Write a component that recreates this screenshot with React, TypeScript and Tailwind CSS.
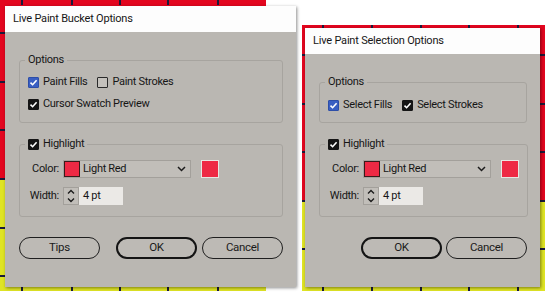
import { ReactNode } from 'react';

type Box = 'blue' | 'black' | 'off';

const Check = ({ kind }: { kind: Box }) => {
  if (kind === 'off') {
    return <span className="block w-[11px] h-[11px] border border-[#2a2a2a] bg-[#c4c1bc] rounded-[1px]" />;
  }
  return (
    <span
      className={`flex w-[11px] h-[11px] items-center justify-center rounded-[1px] ${
        kind === 'blue' ? 'bg-[#3a5fc2] border border-[#2d4ea8]' : 'bg-[#151515] border border-[#151515]'
      }`}
    >
      <svg width="9" height="9" viewBox="0 0 9 9">
        <path d="M1.5 4.6 L3.6 6.7 L7.6 2.2" fill="none" stroke="white" strokeWidth="1.6" />
      </svg>
    </span>
  );
};

const Option = ({ kind, label }: { kind: Box; label: string }) => (
  <div className="flex items-center gap-[4px] h-4">
    <Check kind={kind} />
    <span>{label}</span>
  </div>
);

const Group = ({ legend, children, className }: { legend: ReactNode; children: ReactNode; className: string }) => (
  <fieldset className={`border border-[#a7a49f] rounded-[3px] pl-2 pr-2 ${className}`}>
    <legend className="-ml-[3px] px-[3px] leading-4">{legend}</legend>
    {children}
  </fieldset>
);

const Spinner = () => (
  <svg width="14" height="16" viewBox="0 0 14 16">
    <path d="M4 5.5 L7 2.5 L10 5.5" fill="none" stroke="#1c1c1c" strokeWidth="1.4" />
    <path d="M4 10.5 L7 13.5 L10 10.5" fill="none" stroke="#1c1c1c" strokeWidth="1.4" />
  </svg>
);

const HighlightGroup = () => (
  <Group legend={<Option kind="black" label="Highlight" />} className="mt-[13px] pb-[11px]">
    <div className="mt-[8px] flex items-center h-[18px]">
      <span className="w-[31px] text-right">Color:</span>
      <div className="ml-[4px] w-[128px] h-[18px] flex items-center border border-[#a3a09b] bg-[#c1beb9] pr-[4px]">
        <span className="w-[16px] h-[16px] bg-[#ee2944] border border-[#3a1a1a]" />
        <span className="ml-[3px] flex-1">Light Red</span>
        <svg width="9" height="6" viewBox="0 0 9 6">
          <path d="M1 1 L4.5 4.5 L8 1" fill="none" stroke="#1c1c1c" strokeWidth="1.5" />
        </svg>
      </div>
      <span className="ml-[10px] w-[18px] h-[18px] bg-[#ee2944] border border-[#e9e6e2]" />
    </div>
    <div className="mt-[9px] flex items-center h-[18px]">
      <span className="w-[31px] text-right">Width:</span>
      <div className="ml-[4px] flex h-[18px]">
        <span className="w-[16px] h-[18px] bg-[#c1beb9] border border-[#a3a09b]">
          <Spinner />
        </span>
        <span className="w-[44px] h-[18px] bg-[#ebe9e6] flex items-center pl-[4px]">4 pt</span>
      </div>
    </div>
  </Group>
);

const Button = ({ label, primary }: { label: string; primary?: boolean }) => (
  <button
    className={`h-[22px] w-[81px] rounded-full bg-[#bdbab5] text-[#1b1b1b] text-[11.5px] ${
      primary ? 'border-2 border-[#141414]' : 'border-[1.5px] border-[#1f1f1f]'
    }`}
  >
    {label}
  </button>
);

const Dialog = ({ title, className, children }: { title: string; className: string; children: ReactNode }) => (
  <div className={`absolute flex flex-col shadow-[1px_1px_3px_rgba(0,0,0,0.45)] ${className}`}>
    <div className="h-[26px] bg-[#fdfdfd] flex items-center pl-[8px] text-[11px] tracking-[-0.2px]">{title}</div>
    <div className="flex-1 bg-[#bab7b2] pl-[14px] pr-[13px]">{children}</div>
  </div>
);

const Canvas = ({
  className,
  redHeight,
  xs,
  ys,
  w,
  h,
}: {
  className: string;
  redHeight: string;
  xs: number[];
  ys: number[];
  w: number;
  h: number;
}) => (
  <div className={`absolute flex flex-col ${className}`}>
    <div className={`bg-[#e3061f] ${redHeight}`} />
    <div className="flex-1 bg-[#dfe424]" />
    {xs.map(x => (
      <span key={'t' + x} className="absolute top-0 w-[2px] h-[5px] bg-[#1b1b3a]" style={{ left: x }} />
    ))}
    {xs.map(x => (
      <span key={'b' + x} className="absolute w-[2px] h-[5px] bg-[#1b1b3a]" style={{ left: x, top: h - 5 }} />
    ))}
    {ys.map(y => (
      <span key={'l' + y} className="absolute left-0 h-[2px] w-[5px] bg-[#1b1b3a]" style={{ top: y }} />
    ))}
    {ys.map(y => (
      <span key={'r' + y} className="absolute h-[2px] w-[5px] bg-[#1b1b3a]" style={{ top: y, left: w - 5 }} />
    ))}
  </div>
);

export default function App() {
  return (
    <div className="relative w-[555px] h-[294px] bg-white overflow-hidden text-[11px] tracking-[-0.3px] text-[#161616] font-['Roboto','Liberation_Sans',sans-serif]">
      <Canvas
        className="left-0 top-0 w-[266px] h-[291px]"
        redHeight="h-[179px]"
        xs={[21, 71, 119, 167, 217]}
        ys={[32, 81, 129, 178, 227, 275]}
        w={266}
        h={291}
      />
      <Canvas
        className="left-[302px] top-[25px] w-[243px] h-[266px]"
        redHeight="h-[177px]"
        xs={[20, 69, 118, 166, 215]}
        ys={[29, 78, 126, 175, 223]}
        w={243}
        h={266}
      />

      <Dialog title="Live Paint Bucket Options" className="left-[5px] top-[6px] w-[291px] h-[281px]">
        <Group legend="Options" className="mt-[20px] pb-[10px]">
          <div className="mt-[6px] flex items-center gap-[10px]">
            <Option kind="blue" label="Paint Fills" />
            <Option kind="off" label="Paint Strokes" />
          </div>
          <div className="mt-[6px]">
            <Option kind="black" label="Cursor Swatch Preview" />
          </div>
        </Group>
        <HighlightGroup />
        <div className="mt-[20px] flex justify-between">
          <Button label="Tips" />
          <div className="flex gap-[5px]">
            <Button label="OK" primary />
            <Button label="Cancel" />
          </div>
        </div>
      </Dialog>

      <Dialog title="Live Paint Selection Options" className="left-[305px] top-[28px] w-[235px] h-[259px]">
        <Group legend="Options" className="mt-[20px] pb-[9px]">
          <div className="mt-[7px] flex items-center gap-[10px]">
            <Option kind="blue" label="Select Fills" />
            <Option kind="black" label="Select Strokes" />
          </div>
        </Group>
        <HighlightGroup />
        <div className="mt-[20px] flex justify-end gap-[4px]">
          <Button label="OK" primary />
          <Button label="Cancel" />
        </div>
      </Dialog>
    </div>
  );
}
